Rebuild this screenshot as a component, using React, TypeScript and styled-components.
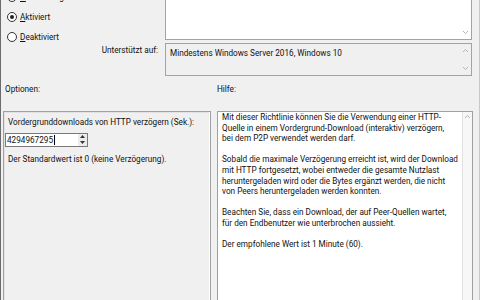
import React from 'react';
import styled, { createGlobalStyle } from 'styled-components';

const GlobalStyle = createGlobalStyle`
  body {
    margin: 0;
    font-family: Roboto, "Noto Sans", sans-serif;
  }
`;

const helpText: string[][] = [
  [
    'Mit dieser Richtlinie können Sie die Verwendung einer HTTP-',
    'Quelle in einem Vordergrund-Download (interaktiv) verzögern,',
    'bei dem P2P verwendet werden darf.',
  ],
  [
    'Sobald die maximale Verzögerung erreicht ist, wird der Download',
    'mit HTTP fortgesetzt, wobei entweder die gesamte Nutzlast',
    'heruntergeladen wird oder die Bytes ergänzt werden, die nicht',
    'von Peers heruntergeladen werden konnten.',
  ],
  [
    'Beachten Sie, dass ein Download, der auf Peer-Quellen wartet,',
    'für den Endbenutzer wie unterbrochen aussieht.',
  ],
  ['Der empfohlene Wert ist 1 Minute (60).'],
];

const radios = [
  { key: 'N', rest: 'icht konfiguriert', checked: false },
  { key: 'A', rest: 'ktiviert', checked: true },
  { key: 'D', rest: 'eaktiviert', checked: false },
];

const Dialog = styled.div`
  width: 480px;
  height: 300px;
  overflow: hidden;
  box-sizing: border-box;
  background: #f0f0f0;
  border-left: 1px solid #6b6b6b;
  border-right: 1px solid #c8c8c8;
  font-size: 8.2px;
  line-height: 10px;
  color: #111;
`;

const Top = styled.div`
  display: grid;
  grid-template-columns: 164px 307px;
  margin-top: -14px;
`;

const LeftCol = styled.div`
  display: flex;
  flex-direction: column;
  padding: 5.5px 0 0 6px;
`;

const RadioList = styled.div`
  display: flex;
  flex-direction: column;
  gap: 10px;
`;

const RadioRow = styled.label`
  display: flex;
  align-items: center;
  gap: 3px;
  height: 10px;
  white-space: nowrap;
`;

const RadioCircle = styled.span<{ $checked: boolean }>`
  width: 10px;
  height: 10px;
  box-sizing: border-box;
  border: 1px solid #333;
  border-radius: 50%;
  background: #fff;
  display: flex;
  align-items: center;
  justify-content: center;
  &::after {
    content: '';
    width: 4px;
    height: 4px;
    border-radius: 50%;
    background: ${(p) => (p.$checked ? '#222' : 'transparent')};
  }
`;

const AccessKey = styled.span`
  text-decoration: underline;
  text-underline-offset: 1px;
`;

const SupportLabel = styled.div`
  margin-top: 3.5px;
  padding-right: 7px;
  text-align: right;
  white-space: nowrap;
`;

const RightCol = styled.div`
  display: flex;
  flex-direction: column;
  gap: 3px;
`;

const ReadBox = styled.div<{ $h: number; $bg: string }>`
  height: ${(p) => p.$h}px;
  box-sizing: border-box;
  border: 1px solid #a3a3a3;
  background: ${(p) => p.$bg};
  display: flex;
`;

const BoxText = styled.div`
  flex: 1;
  padding: 4px 0 0 4px;
  white-space: nowrap;
`;

const ScrollTrack = styled.div<{ $bordered?: boolean }>`
  width: 11px;
  display: flex;
  flex-direction: column;
  justify-content: space-between;
  align-items: center;
  padding: 4px 0 4px;
  box-sizing: border-box;
  ${(p) => (p.$bordered ? 'border-left: 1px solid #dcdcdc; background: #f0f0f0;' : '')}
`;

const Chevron = ({ up }: { up?: boolean }) => (
  <svg width="7" height="5" viewBox="0 0 7 5">
    <polyline
      points={up ? '1,4 3.5,1.5 6,4' : '1,1 3.5,3.5 6,1'}
      fill="none"
      stroke="#b4b4b4"
      strokeWidth="1"
    />
  </svg>
);

const Spacer = styled.span`
  flex: 1;
`;

const LabelsRow = styled.div`
  display: grid;
  grid-template-columns: 208px 256px;
  column-gap: 6px;
  padding-left: 2px;
  margin-top: 8px;
`;

const SectionLabel = styled.div<{ $indent: number }>`
  padding-left: ${(p) => p.$indent}px;
`;

const Panels = styled.div`
  display: grid;
  grid-template-columns: 208px 256px;
  column-gap: 6px;
  padding-left: 2px;
  margin-top: 17px;
  height: 220px;
`;

const OptionsPanel = styled.div`
  box-sizing: border-box;
  border: 1px solid #a0a0a0;
  box-shadow: inset -1px -1px 0 #fff, inset 1px 1px 0 #e3e3e3;
  padding: 5px 5px 0 4px;
  line-height: 10.6px;
  white-space: nowrap;
`;

const SpinField = styled.div`
  display: flex;
  width: 83px;
  height: 14px;
  box-sizing: border-box;
  margin: 5px 0 0 -3px;
  border: 1px solid #7a7a7a;
  background: #fff;
`;

const SpinValue = styled.div`
  flex: 1;
  padding-left: 1px;
  line-height: 12px;
  display: flex;
  align-items: center;
`;

const Caret = styled.span`
  width: 1px;
  height: 10px;
  background: #000;
  margin-left: 0.5px;
`;

const SpinButtons = styled.div`
  width: 9px;
  display: flex;
  flex-direction: column;
  background: #ececec;
  border-left: 1px solid #fff;
`;

const SpinButton = styled.div`
  flex: 1;
  display: flex;
  align-items: center;
  justify-content: center;
`;

const Triangle = ({ up }: { up?: boolean }) => (
  <svg width="5" height="3" viewBox="0 0 5 3">
    <polygon points={up ? '0,3 2.5,0 5,3' : '0,0 5,0 2.5,3'} fill="#333" />
  </svg>
);

const Hint = styled.div`
  margin-top: 7px;
`;

const HelpPanel = styled.div`
  box-sizing: border-box;
  border: 1px solid #a0a0a0;
  background: #fff;
  display: flex;
`;

const HelpBody = styled.div`
  flex: 1;
  padding: 0 0 0 4px;
  line-height: 10.6px;
  white-space: nowrap;
  display: flex;
  flex-direction: column;
  gap: 10.6px;
`;

const HelpScroll = styled.div`
  width: 10px;
  background: #f7f7f7;
  border-left: 1px solid #e2e2e2;
  display: flex;
  justify-content: center;
  padding-top: 2px;
  box-sizing: border-box;
`;

export default function App() {
  return (
    <>
      <GlobalStyle />
      <Dialog>
        <Top>
          <LeftCol>
            <RadioList>
              {radios.map((r) => (
                <RadioRow key={r.key}>
                  <RadioCircle $checked={r.checked} />
                  <span>
                    <AccessKey>{r.key}</AccessKey>
                    {r.rest}
                  </span>
                </RadioRow>
              ))}
            </RadioList>
            <SupportLabel>Unterstützt auf:</SupportLabel>
          </LeftCol>
          <RightCol>
            <ReadBox $h={54} $bg="#fff">
              <Spacer />
              <ScrollTrack>
                <Spacer />
                <Chevron />
              </ScrollTrack>
            </ReadBox>
            <ReadBox $h={33} $bg="#f0f0f0">
              <BoxText>Mindestens Windows Server 2016, Windows 10</BoxText>
              <ScrollTrack>
                <Chevron up />
                <Chevron />
              </ScrollTrack>
            </ReadBox>
          </RightCol>
        </Top>

        <LabelsRow>
          <SectionLabel $indent={2}>Optionen:</SectionLabel>
          <SectionLabel $indent={0}>Hilfe:</SectionLabel>
        </LabelsRow>

        <Panels>
          <OptionsPanel>
            <div>Vordergrunddownloads von HTTP verzögern (Sek.):</div>
            <SpinField>
              <SpinValue>
                4294967295
                <Caret />
              </SpinValue>
              <SpinButtons>
                <SpinButton>
                  <Triangle up />
                </SpinButton>
                <SpinButton>
                  <Triangle />
                </SpinButton>
              </SpinButtons>
            </SpinField>
            <Hint>Der Standardwert ist 0 (keine Verzögerung).</Hint>
          </OptionsPanel>
          <HelpPanel>
            <HelpBody>
              {helpText.map((para, i) => (
                <div key={i}>
                  {para.map((line) => (
                    <div key={line}>{line}</div>
                  ))}
                </div>
              ))}
            </HelpBody>
            <HelpScroll>
              <Chevron up />
            </HelpScroll>
          </HelpPanel>
        </Panels>
      </Dialog>
    </>
  );
}
